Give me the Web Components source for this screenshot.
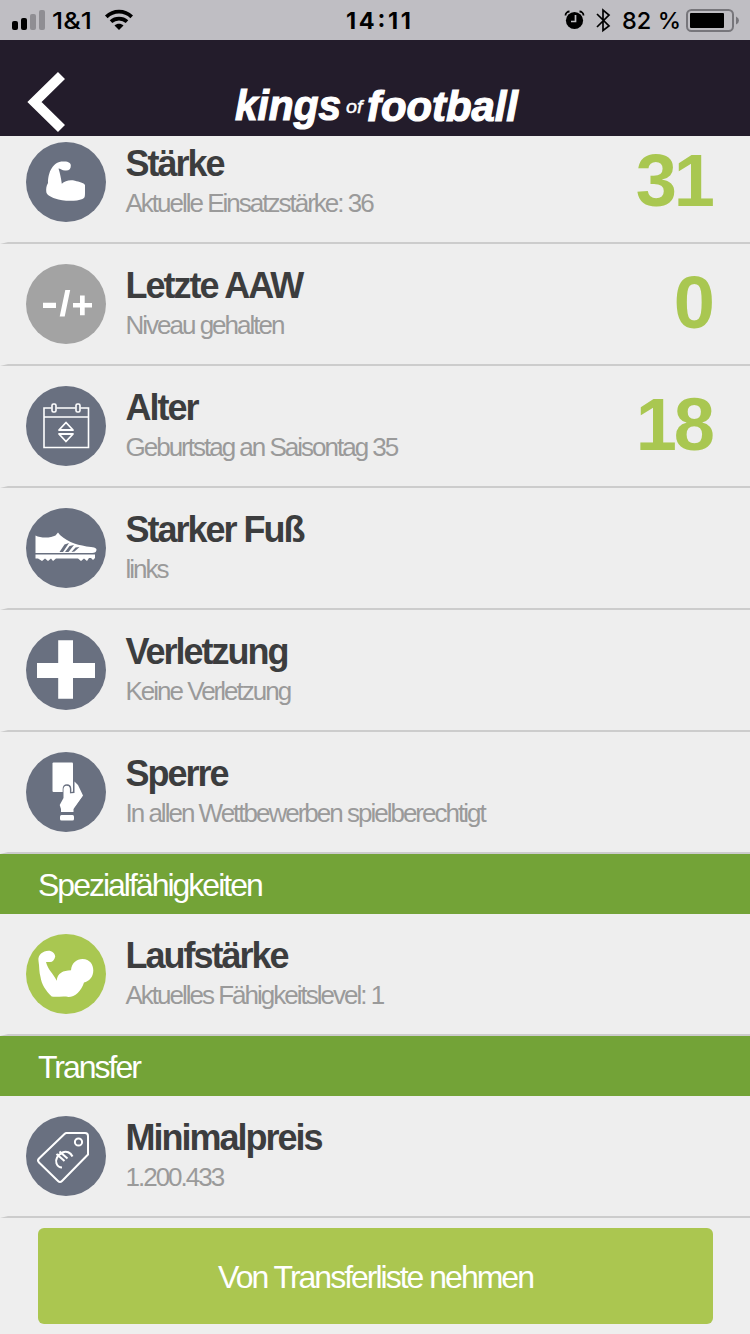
<!DOCTYPE html>
<html lang="de">
<head>
<meta charset="utf-8">
<title>Kings of Football</title>
<style>
html,body{margin:0;height:100%;overflow:hidden;background:#eee}
body{font-family:"Liberation Sans",Arial,sans-serif}
</style>
</head>
<body>
<player-app></player-app>
<script>
const ICONS = {
  arm: `<path d="M22 41C22 30 27 19.500 37 19.500C42 19 45 21 44.800 23.500C45 27 43 29 39 28.500C36 28.500 34.500 26.500 32.500 26.500C34 31 35 36 35.800 41.800C39 38.500 44 37.500 49 38.700C53 40 58 40.500 59 43V51C59 55 58.500 56 56.500 57C50 59.600 37 59.500 29 56.500C25 55 20.500 53 20.300 50C20 47 20.200 44 22 41Z"/>`,
  plusminus: `<path d="M17 38.700H30V44H17ZM39.300 26H44.200L38.700 52.500H33.700ZM54 31.500H58.700V39H66V43.500H58.700V51.300H54V43.500H47V39H54Z"/>`,
  calendar: `<g fill="none" stroke="#fff" stroke-width="1.600"><path d="M25.500 22H18V61.500H62.500V22H54.500M30.500 22H49.500M18 31H62.500"/><rect x="26" y="18" width="4" height="8" rx="1.500"/><rect x="50" y="18" width="4" height="8" rx="1.500"/><path d="M40 36.500L47 44H33ZM40 55.500L33 48H47Z" stroke-width="1.800" stroke-linejoin="round"/></g>`,
  shoe: `<path d="M9.500 27.500C15 30.500 25 30 29.500 27.500L32 24.500L34 27C43 35 53 37.500 65 39C70 39.500 71.500 41 70 43.500C69.500 45 67 45 64 45H9.500ZM9.500 46.500H69V50L67 52L65 50H63L61 53L58 50.500L55 53L52 50.500H30L27 53L25 50.500L22 53L19 50.500L16 53L12 50.500H9.500Z"/><path d="M33.500 44L38.500 36.500L43 35L37 44ZM39 44L43.500 38L48 37L42.500 44ZM45.500 44L49.500 39.500L53.500 39L48.500 43.500Z" fill="#697080"/>`,
  cross: `<path d="M32.200 10.200H47V33H69V48H47V68.700H32.200V48H11V33H32.200Z"/>`,
  card: `<rect x="26.500" y="10.500" width="20.500" height="29.500" rx="1"/><path d="M37.500 37C37.500 32 44.500 31.500 44.500 37V41H48.500V29.500L52 34L57.500 44L47 58V60H35V57L34 53L37.500 46Z" stroke="#697080" stroke-width="1.700"/><path d="M48.500 29.500L52 33L57 43.500L47.500 57V60H35V57L33.700 53L37.500 46V37C37.500 32.500 43.800 32.500 43.800 37V41.500L48.500 41Z"/><rect x="34" y="63" width="14" height="5.500" rx="1.500"/>`,
  biceps: `<path d="M12.500 27C11.500 21 17 16.800 22.500 16.800C26 16.800 29 19.500 29.200 22.500C28.500 26.500 26 28.500 23.300 27.900L20 27.900C22 36 27 39 30.700 46.700C31.500 39 37 36.500 45 36.300C45.500 29 50.500 25 56.500 25C64 25.200 67.300 30.500 67.300 36.500C67.300 43 63 47.500 58 48.500C55.500 57 49 63 42.500 63C37 61.500 31 63.500 25.700 62.500C19.500 56.500 15.500 50 14.500 43C13 38 13.500 33 12.500 27Z"/>`,
  tag: `<g fill="none" stroke="#fff" stroke-width="2" stroke-linejoin="round"><path d="M40.500 17H59Q62 17 62 20V38.500L36 65Q34 67 32 65L13 46.500Q11 44.500 13 42.500L38.500 18Q39.500 17 40.500 17Z"/><circle cx="52.500" cy="26" r="3.600"/><path d="M46.500 40.500C44.500 36.500 40.500 34.500 36.500 36.500C31.500 39 29 43.500 30.500 47.500C31.500 50 33.500 51.500 36 51.500M30.500 38L38.500 45M33.500 35.500L41.500 42.500" stroke-width="2.100"/></g>`
};

function define(name, markup) {
  const template = document.createElement('template');
  template.innerHTML = markup;
  customElements.define(name, class extends HTMLElement {
    constructor() {
      super();
      this.attachShadow({mode: 'open'}).appendChild(template.content.cloneNode(true));
    }
  });
}

customElements.define('round-icon', class extends HTMLElement {
  connectedCallback() {
    const root = this.shadowRoot || this.attachShadow({mode: 'open'});
    root.innerHTML = `<style>:host{display:block;flex:none;width:80px;height:80px;border-radius:50%;background:var(--disc,#697080)}svg{display:block}</style>
      <svg width="80" height="80" viewBox="0 0 80 80" fill="#fff">${ICONS[this.getAttribute('name')]}</svg>`;
  }
});

define('status-bar', `<style>
:host{display:block;height:40px;background:#bfbec3}svg{display:block}
text{font-family:Inter,"Noto Sans",sans-serif;font-size:23.500px}
</style>
<svg width="750" height="40" viewBox="0 0 750 40">
<rect x="12" y="21" width="6" height="9" rx="2"/><rect x="21" y="18" width="6" height="12" rx="2"/>
<rect x="30" y="14" width="6" height="16" rx="2" fill="#8f8e93"/><rect x="39" y="10" width="6" height="20" rx="2" fill="#8f8e93"/>
<text x="52" y="29.300" textLength="40" lengthAdjust="spacingAndGlyphs" font-weight="500">1&amp;1</text>
<g fill="none" stroke="#000" stroke-width="3.800"><path d="M106.300 16.800C113.500 10 124.500 10 131.700 16.800"/><path d="M111 21.700C115.500 17.700 122.500 17.700 127 21.700"/></g>
<path d="M119 30L114.500 25.500C117 23.300 121 23.300 123.500 25.500Z"/>
<text x="346" y="29.300" textLength="65" font-weight="700">14:11</text>
<circle cx="574.500" cy="20.500" r="8.600"/><path d="M575.500 15V21.500H571" fill="none" stroke="#bfbec3" stroke-width="1.700"/>
<path d="M565.500 15.500C565.500 13 567.500 11.500 569.500 11.500M579.500 11.500C581.500 11.500 583.500 13 583.500 15.500" fill="none" stroke="#000" stroke-width="1.800"/>
<path d="M597 14L609 26L603 30.500V10L609 15L597 27" fill="none" stroke="#000" stroke-width="1.700"/>
<text x="622" y="29.300" textLength="59" font-weight="500">82 %</text>
<rect x="687" y="10" width="46" height="21" rx="4.500" fill="none" stroke="#77767b" stroke-width="2"/>
<rect x="690" y="13" width="34" height="15" rx="1"/><path d="M736 16.500Q739 18 739 20.500T736 24.500Z" fill="#77767b"/>
</svg>`);

define('title-bar', `<style>
:host{display:block;height:96px;background:#231c2b}svg{display:block}
text{font-family:"Liberation Sans",Arial,sans-serif;font-weight:bold;font-style:italic;fill:#fff;stroke:#fff;stroke-width:1.200px}
.of{font-size:17.500px;font-weight:normal;stroke-width:.4px}
</style>
<svg width="750" height="96" viewBox="0 0 750 96">
<path d="M61.500 35.500L34.500 62L61.500 88.500" fill="none" stroke="#fff" stroke-width="10"/>
<text x="235" y="79.500" font-size="42" textLength="106" lengthAdjust="spacingAndGlyphs">kings</text>
<text class="of" x="346" y="72.500" textLength="16.500" lengthAdjust="spacingAndGlyphs">of</text>
<text x="367" y="80.500" font-size="42" textLength="151" lengthAdjust="spacingAndGlyphs">football</text>
</svg>`);

define('info-row', `<style>
:host{display:flex;box-sizing:border-box;height:122px;padding:20px 38px 0 18px;border-bottom:2px solid #ccc;border-left:8px solid transparent;letter-spacing:-2px}
.text{flex:1;margin-left:20px;padding-top:1px;white-space:nowrap;line-height:40px}
.title{font-size:36px;font-weight:bold;color:#3c3d3e;height:40px;line-height:42px;margin-left:-.5px}
.sub{font-size:26px;color:#9a9a9a;margin-left:-.5px}
.value{font-size:74px;font-weight:bold;color:#a9c751;line-height:78px;letter-spacing:-3px}
</style>
<slot name="icon"></slot><div class="text"><div class="title"><slot name="title"></slot></div><div class="sub"><slot></slot></div></div><div class="value"><slot name="value"></slot></div>`);

define('section-header', `<style>
:host{display:block;height:60px;padding-left:38px;background:#73a337;color:#fff;font-size:32px;line-height:62px;letter-spacing:-2px}
</style><slot></slot>`);

define('action-button', `<style>
:host{display:block;margin:10px 37px 0 38px}
button{display:block;width:100%;height:96px;border:0;border-radius:6px;padding:2px 0 0;background:#abc650;color:#fff;font:32px "Liberation Sans",Arial,sans-serif;letter-spacing:-2px}
</style><button><slot></slot></button>`);

define('player-app', `<style>
:host{display:flex;flex-direction:column;width:750px;height:1334px;overflow:hidden;background:#eee}
main{flex:1;min-height:0;overflow:hidden}
.list{margin-top:-14px}
.grey{--disc:#a3a3a3}.green{--disc:#a9c751}
</style>
<status-bar></status-bar><title-bar></title-bar>
<main><div class="list">
<info-row><round-icon slot="icon" name="arm"></round-icon><span slot="title">Stärke</span>Aktuelle Einsatzstärke: 36<span slot="value">31</span></info-row>
<info-row><round-icon slot="icon" name="plusminus" class="grey"></round-icon><span slot="title">Letzte AAW</span>Niveau gehalten<span slot="value">0</span></info-row>
<info-row><round-icon slot="icon" name="calendar"></round-icon><span slot="title">Alter</span>Geburtstag an Saisontag 35<span slot="value">18</span></info-row>
<info-row><round-icon slot="icon" name="shoe"></round-icon><span slot="title">Starker Fuß</span>links</info-row>
<info-row><round-icon slot="icon" name="cross"></round-icon><span slot="title">Verletzung</span>Keine Verletzung</info-row>
<info-row><round-icon slot="icon" name="card"></round-icon><span slot="title">Sperre</span>In allen Wettbewerben spielberechtigt</info-row>
<section-header>Spezialfähigkeiten</section-header>
<info-row><round-icon slot="icon" name="biceps" class="green"></round-icon><span slot="title">Laufstärke</span>Aktuelles Fähigkeitslevel: 1</info-row>
<section-header>Transfer</section-header>
<info-row><round-icon slot="icon" name="tag"></round-icon><span slot="title">Minimalpreis</span>1.200.433</info-row>
<action-button>Von Transferliste nehmen</action-button>
</div></main>`);
</script>
</body>
</html>
